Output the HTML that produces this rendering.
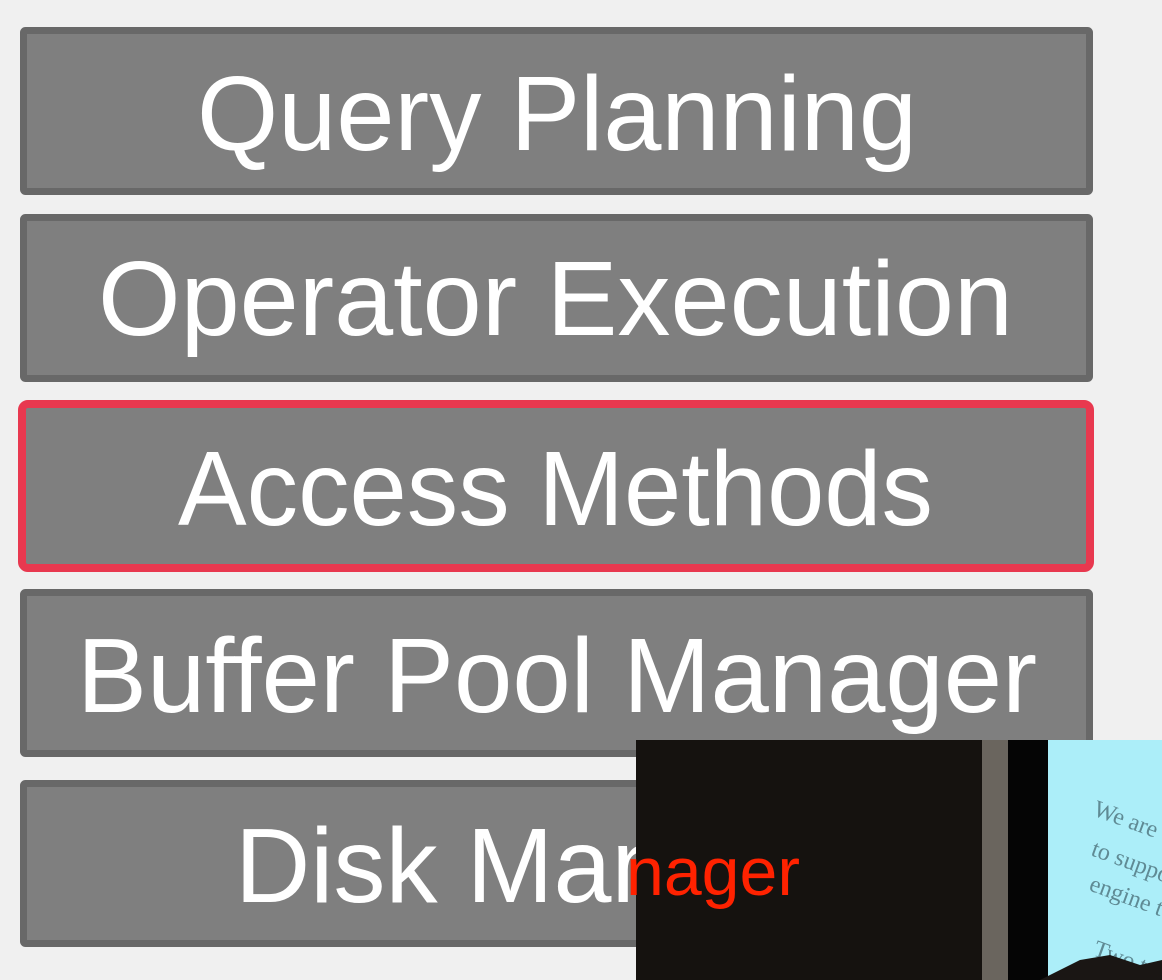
<!DOCTYPE html>
<html><head><meta charset="utf-8"><style>
html,body{margin:0;padding:0;width:1162px;height:980px;overflow:hidden;background:#f0f0f0}
svg{display:block}
</style></head><body>
<svg width="1162" height="980" xmlns="http://www.w3.org/2000/svg" font-family="Liberation Sans, sans-serif">
<rect width="1162" height="980" fill="#f0f0f0"/>
<g fill="#7f7f7f" stroke="#686868" stroke-width="7">
<rect x="23.5" y="30.5" width="1066" height="161" rx="2"/>
<rect x="23.5" y="217.5" width="1066" height="161" rx="2"/>
<rect x="23.5" y="592.5" width="1066" height="161" rx="2"/>
<rect x="23.5" y="783.5" width="1066" height="160" rx="2"/>
</g>
<rect x="22" y="404" width="1068" height="164" rx="6" fill="#7f7f7f" stroke="#e8384f" stroke-width="8"/>
<g fill="#fff" font-size="106">
<text x="197" y="150" textLength="720" lengthAdjust="spacingAndGlyphs">Query Planning</text>
<text x="98" y="335" textLength="915" lengthAdjust="spacingAndGlyphs">Operator Execution</text>
<text x="178" y="525" textLength="755" lengthAdjust="spacingAndGlyphs">Access Methods</text>
<text x="77" y="712" textLength="960" lengthAdjust="spacingAndGlyphs">Buffer Pool Manager</text>
<text x="235" y="902" textLength="643" lengthAdjust="spacingAndGlyphs">Disk Manager</text>
</g>
<rect x="636" y="740" width="526" height="240" fill="#15120f"/>
<rect x="982" y="740" width="26" height="240" fill="#6a655e"/>
<rect x="1008" y="740" width="40" height="240" fill="#050505"/>
<rect x="1048" y="740" width="114" height="240" fill="#aceef9"/>
<g fill="#5f8a94" font-family="Liberation Serif, serif" font-size="24">
<text x="1092" y="815" transform="rotate(20 1092 815)">We are</text>
<text x="1090" y="855" transform="rotate(20 1090 855)">to suppo</text>
<text x="1088" y="890" transform="rotate(20 1088 890)">engine t</text>
<text x="1092" y="955" transform="rotate(20 1092 955)">Two typ</text>
</g>
<path d="M1040 980 L1080 960 L1110 955 L1140 965 L1162 960 L1162 980 Z" fill="#1a1614"/>
<text x="626" y="895" font-size="68" fill="#ff2200" textLength="174" lengthAdjust="spacingAndGlyphs">nager</text>
</svg>
</body></html>
